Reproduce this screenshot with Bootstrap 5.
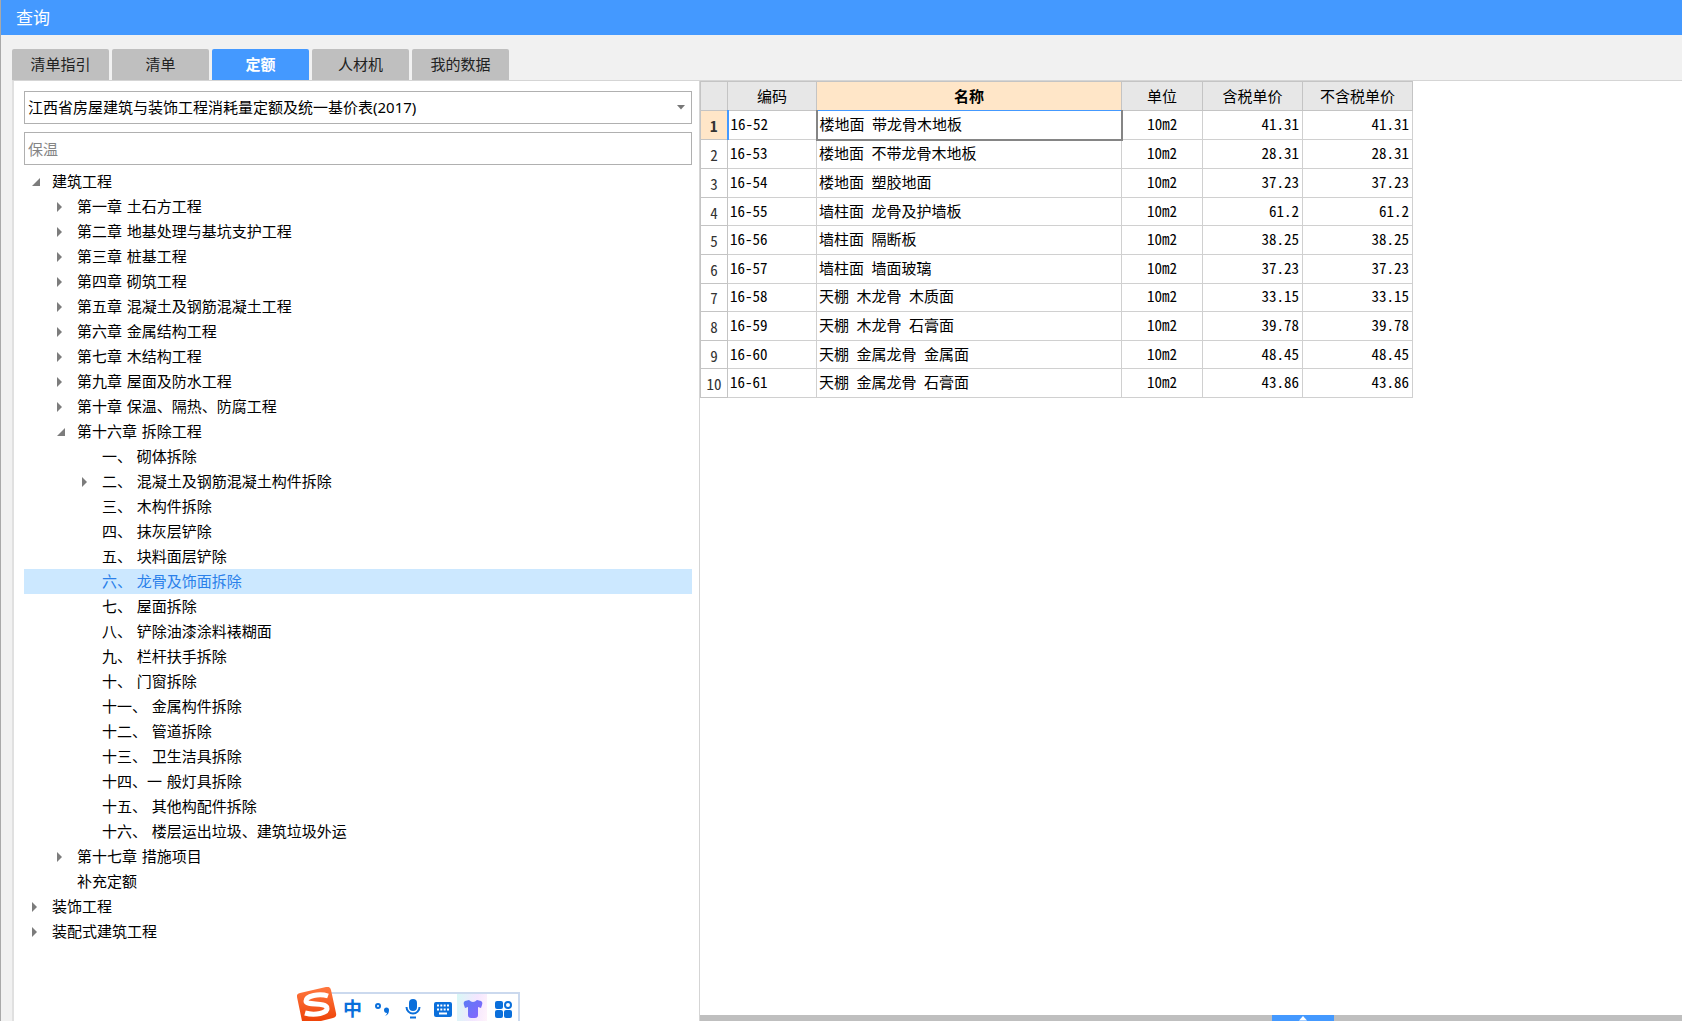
<!DOCTYPE html>
<html lang="zh-CN">
<head>
<meta charset="utf-8">
<meta name="viewport" content="width=device-width, initial-scale=1">
<title>查询</title>
<link href="https://cdn.jsdelivr.net/npm/bootstrap@5.3.0/dist/css/bootstrap.min.css" rel="stylesheet">
<style>
  body { font-family: "Noto Sans", "Noto Sans CJK SC", sans-serif; font-size: 15px; line-height: 25px; color: #000; background: #f1f1f1; }
  .app-window { border-left: 1px solid #a9a9a9; }
  .title-bar { height: 35px; background: #4499ff; font-size: 17px; padding-left: 15px; }
  .tab-strip { gap: 3px; padding: 14px 0 0 11px; }
  .tab-btn { width: 97px; height: 31px; border: 0; padding: 0; border-radius: 2px 2px 0 0; background: #bfbfbf; color: #222; line-height: 31px; }
  .tab-btn.active { background: #4499ff; color: #fff; font-weight: 700; }
  .work-area { margin-left: 11px; border-top: 1px solid #d5d5d5; border-left: 2px solid #e0e0e0; }
  .side-pane { flex: 0 0 686px; max-width: 50%; padding: 10px 7px 0 10px; border-right: 1px solid #d5d5d5; }
  .side-pane .form-select, .side-pane .form-control { height: 33px; border: 1px solid #b0b0b0; border-radius: 0; padding: 0 20px 0 3px; font-size: 15px; color: #000; line-height: 31px; box-shadow: none; }
  .side-pane .form-select { background: #fff url("data:image/svg+xml,%3Csvg xmlns='http://www.w3.org/2000/svg' viewBox='0 0 8 5'%3E%3Cpath d='M0 0h8L4 4.500z' fill='%23777'/%3E%3C/svg%3E") no-repeat right 6px center / 8px 5px; }
  .side-pane .form-control { margin-top: 8px; }
  .side-pane .form-control::placeholder { color: #858585; opacity: 1; }
  .tree { font-family: "DejaVu Sans", "Noto Sans CJK SC", sans-serif; margin-top: 4px; }
  .tree li { display: flex; align-items: center; height: 25px; padding-left: 8px; }
  .tree li.lv1 { padding-left: 33px; }
  .tree li.lv2 { padding-left: 58px; }
  .tree svg, .tree i { flex: none; width: 9px; height: 10px; margin-right: 11px; fill: #7c7c7c; }
  .tree a { color: #000; text-decoration: none; white-space: nowrap; padding-top: 2px; }
  .tree li.picked { background: #cce8ff; }
  .tree li.picked a { color: #2a80ea; }
  .grid-pane { min-width: 0; }
  .quota { width: 713px; height: 317px; table-layout: fixed; border-collapse: collapse; font-family: "Noto Sans CJK SC", sans-serif; font-feature-settings: "hwid"; line-height: 22px; }
  .quota th, .quota td { border: 1px solid #d0d0d0; padding: 0 2px; white-space: nowrap; overflow: hidden; }
  .quota td { padding-bottom: 2px; }
  .quota thead th { height: 29px; background: #e7e7e7; font-weight: 400; text-align: center; border-color: #c4c4c4; }
  .quota thead th.hot { background: #ffe6c8; font-weight: 700; border-bottom: 1px solid #4499ff; }
  .quota tbody th { font-weight: 400; text-align: center; color: #333; padding: 2px 0 0; border-color: #c4c4c4; }
  .quota tbody th.hot { background: #ffe6c8; font-weight: 700; border-right: 2px solid #4499ff; }
  .quota td:nth-child(4) { text-align: center; }
  .quota td:nth-child(n+5) { text-align: right; padding-right: 3px; }
  .quota td.cell-focus { border-right: 2px solid #858585; border-bottom: 2px solid #858585; border-left: 2px solid #858585; }
  .drawer-bar { height: 6px; background: #bfbfbf; }
  .drawer-bar button { width: 62px; height: 6px; border: 0; padding: 0; background: #4499ff; line-height: 0; margin-left: 224px; }
  .ime-bar { left: 296px; bottom: 0; height: 34px; }
  .ime-panel { height: 29px; width: 206px; margin-left: -23px; padding-left: 23px; border: solid #cbd9ee; border-width: 2px 2px 0 0; background: #fff; }
  .ime-panel button { width: 30px; height: 27px; padding: 0 0 0 1px; border: 0; background: transparent; color: #0a6fdb; font: 700 19px/25px "Noto Sans CJK SC", sans-serif; flex: none; }
  .ime-panel svg { display: block; margin: 3px auto 0; }
  .ime-panel .skin { background: linear-gradient(100deg, #d8f8f6, #f4e6ff 60%, #fff3fb); }
</style>
<script src="https://cdn.jsdelivr.net/npm/bootstrap@5.3.0/dist/js/bootstrap.bundle.min.js"></script>
</head>
<body>
<svg class="d-none"><symbol id="shut" viewBox="0 0 9 10"><path d="M0 0v10l5-5z"/></symbol><symbol id="open" viewBox="0 0 9 10"><path d="M8 1v8H0z"/></symbol></svg>
<div class="app-window d-flex flex-column vh-100 overflow-hidden position-relative">
  <header class="title-bar text-white d-flex align-items-center flex-shrink-0">查询</header>
  <nav class="tab-strip d-flex flex-shrink-0" role="tablist" aria-label="数据来源">
    <button class="tab-btn" type="button" role="tab">清单指引</button>
    <button class="tab-btn" type="button" role="tab">清单</button>
    <button class="tab-btn active" type="button" role="tab" aria-selected="true">定额</button>
    <button class="tab-btn" type="button" role="tab">人材机</button>
    <button class="tab-btn" type="button" role="tab">我的数据</button>
  </nav>
  <main class="work-area d-flex flex-fill bg-white">
    <section class="side-pane">
      <select class="form-select" aria-label="定额库"><option>江西省房屋建筑与装饰工程消耗量定额及统一基价表(2017)</option></select>
      <input class="form-control" type="text" placeholder="保温" aria-label="搜索">
      <ul class="tree list-unstyled mb-0">
        <li><svg><use href="#open"/></svg><a href="#">建筑工程</a></li>
        <li class="lv1"><svg><use href="#shut"/></svg><a href="#">第一章 土石方工程</a></li>
        <li class="lv1"><svg><use href="#shut"/></svg><a href="#">第二章 地基处理与基坑支护工程</a></li>
        <li class="lv1"><svg><use href="#shut"/></svg><a href="#">第三章 桩基工程</a></li>
        <li class="lv1"><svg><use href="#shut"/></svg><a href="#">第四章 砌筑工程</a></li>
        <li class="lv1"><svg><use href="#shut"/></svg><a href="#">第五章 混凝土及钢筋混凝土工程</a></li>
        <li class="lv1"><svg><use href="#shut"/></svg><a href="#">第六章 金属结构工程</a></li>
        <li class="lv1"><svg><use href="#shut"/></svg><a href="#">第七章 木结构工程</a></li>
        <li class="lv1"><svg><use href="#shut"/></svg><a href="#">第九章 屋面及防水工程</a></li>
        <li class="lv1"><svg><use href="#shut"/></svg><a href="#">第十章 保温、隔热、防腐工程</a></li>
        <li class="lv1"><svg><use href="#open"/></svg><a href="#">第十六章 拆除工程</a></li>
        <li class="lv2"><i></i><a href="#">一、 砌体拆除</a></li>
        <li class="lv2"><svg><use href="#shut"/></svg><a href="#">二、 混凝土及钢筋混凝土构件拆除</a></li>
        <li class="lv2"><i></i><a href="#">三、 木构件拆除</a></li>
        <li class="lv2"><i></i><a href="#">四、 抹灰层铲除</a></li>
        <li class="lv2"><i></i><a href="#">五、 块料面层铲除</a></li>
        <li class="lv2 picked"><i></i><a href="#">六、 龙骨及饰面拆除</a></li>
        <li class="lv2"><i></i><a href="#">七、 屋面拆除</a></li>
        <li class="lv2"><i></i><a href="#">八、 铲除油漆涂料裱糊面</a></li>
        <li class="lv2"><i></i><a href="#">九、 栏杆扶手拆除</a></li>
        <li class="lv2"><i></i><a href="#">十、 门窗拆除</a></li>
        <li class="lv2"><i></i><a href="#">十一、 金属构件拆除</a></li>
        <li class="lv2"><i></i><a href="#">十二、 管道拆除</a></li>
        <li class="lv2"><i></i><a href="#">十三、 卫生洁具拆除</a></li>
        <li class="lv2"><i></i><a href="#">十四、一 般灯具拆除</a></li>
        <li class="lv2"><i></i><a href="#">十五、 其他构配件拆除</a></li>
        <li class="lv2"><i></i><a href="#">十六、 楼层运出垃圾、建筑垃圾外运</a></li>
        <li class="lv1"><svg><use href="#shut"/></svg><a href="#">第十七章 措施项目</a></li>
        <li class="lv1"><i></i><a href="#">补充定额</a></li>
        <li><svg><use href="#shut"/></svg><a href="#">装饰工程</a></li>
        <li><svg><use href="#shut"/></svg><a href="#">装配式建筑工程</a></li>
      </ul>
    </section>
    <section class="grid-pane d-flex flex-column flex-fill">
      <div class="flex-fill">
        <table class="quota">
          <colgroup><col style="width:27px"><col style="width:89px"><col style="width:305px"><col style="width:81px"><col style="width:100px"><col style="width:110px"></colgroup>
          <thead><tr><th></th><th scope="col">编码</th><th class="hot" scope="col">名称</th><th scope="col">单位</th><th scope="col">含税单价</th><th scope="col">不含税单价</th></tr></thead>
          <tbody>
            <tr><th class="hot" scope="row">1</th><td>16-52</td><td class="cell-focus">楼地面 带龙骨木地板</td><td>10m2</td><td>41.31</td><td>41.31</td></tr>
            <tr><th scope="row">2</th><td>16-53</td><td>楼地面 不带龙骨木地板</td><td>10m2</td><td>28.31</td><td>28.31</td></tr>
            <tr><th scope="row">3</th><td>16-54</td><td>楼地面 塑胶地面</td><td>10m2</td><td>37.23</td><td>37.23</td></tr>
            <tr><th scope="row">4</th><td>16-55</td><td>墙柱面 龙骨及护墙板</td><td>10m2</td><td>61.2</td><td>61.2</td></tr>
            <tr><th scope="row">5</th><td>16-56</td><td>墙柱面 隔断板</td><td>10m2</td><td>38.25</td><td>38.25</td></tr>
            <tr><th scope="row">6</th><td>16-57</td><td>墙柱面 墙面玻璃</td><td>10m2</td><td>37.23</td><td>37.23</td></tr>
            <tr><th scope="row">7</th><td>16-58</td><td>天棚 木龙骨 木质面</td><td>10m2</td><td>33.15</td><td>33.15</td></tr>
            <tr><th scope="row">8</th><td>16-59</td><td>天棚 木龙骨 石膏面</td><td>10m2</td><td>39.78</td><td>39.78</td></tr>
            <tr><th scope="row">9</th><td>16-60</td><td>天棚 金属龙骨 金属面</td><td>10m2</td><td>48.45</td><td>48.45</td></tr>
            <tr><th scope="row">10</th><td>16-61</td><td>天棚 金属龙骨 石膏面</td><td>10m2</td><td>43.86</td><td>43.86</td></tr>
          </tbody>
        </table>
      </div>
      <div class="drawer-bar d-flex justify-content-center">
        <button type="button" aria-label="展开"><svg width="8" height="5" viewBox="0 0 8 5"><path d="M4 0l4 4.500H0z" fill="#fff"/></svg></button>
      </div>
    </section>
  </main>
  <div class="ime-bar position-absolute d-flex align-items-end">
    <svg class="position-relative" width="40" height="34" viewBox="0 0 40 34">
      <defs><linearGradient id="orange" x1="0" y1="0" x2="0" y2="1"><stop offset="0" stop-color="#ff7840"/><stop offset="1" stop-color="#ee4409"/></linearGradient></defs>
      <path d="M3 6L29 0q4-1 5 3l5 23q1 4-3 5l-12 3H5L0 10q-1-3 3-4z" fill="url(#orange)"/>
      <path d="M31 9C22 6 9 9 9 14c0 5 20 1 21 7 1 5-12 8-22 5" fill="none" stroke="#fff" stroke-width="5"/>
    </svg>
    <div class="ime-panel d-flex">
      <button type="button">中</button>
      <button type="button" aria-label="标点"><svg width="20" height="20" viewBox="0 0 20 20"><circle cx="5" cy="7" r="2" fill="none" stroke="#0a6fdb" stroke-width="2"/><path d="M11 11a2.500 2.500 0 1 1 5 0c0 3-1 5-4 6 1-1 2-2 2-3-2 0-3-1-3-3z" fill="#0a6fdb"/></svg></button>
      <button type="button" aria-label="语音"><svg width="20" height="22" viewBox="0 0 20 22"><rect x="6" y="1" width="8" height="12" rx="4" fill="#0a6fdb"/><path d="M3.500 9a6.500 6.500 0 0 0 13 0M7 19.500h6" fill="none" stroke="#0a6fdb" stroke-width="2"/></svg></button>
      <button type="button" aria-label="键盘"><svg width="20" height="20" viewBox="0 0 20 20"><rect x="1" y="3" width="18" height="15" rx="2" fill="#0a6fdb"/><path d="M4 6.500h12M4 10.500h12" stroke="#fff" stroke-width="2" stroke-dasharray="2 1.330"/><path d="M6 14.500h8" stroke="#fff" stroke-width="2"/></svg></button>
      <button type="button" class="skin" aria-label="皮肤"><svg width="20" height="20" viewBox="0 0 20 20"><defs><linearGradient id="violet" x1="0" y1="0" x2="1" y2="1"><stop offset="0" stop-color="#5b7cf5"/><stop offset="1" stop-color="#8a63ff"/></linearGradient></defs><path d="M6 1q4 4 8 0l4 1q2 1 1 4l-1 3-3-1v8q0 3-3 3H8q-3 0-3-3V8l-3 1-1-3q-1-3 1-4z" fill="url(#violet)"/></svg></button>
      <button type="button" aria-label="工具箱"><svg width="20" height="20" viewBox="0 0 20 20" fill="#0a6fdb"><rect x="2" y="2" width="8" height="8" rx="2"/><rect x="2" y="11" width="8" height="8" rx="2"/><rect x="11" y="11" width="8" height="8" rx="2"/><circle cx="15" cy="6" r="3" fill="none" stroke="#0a6fdb" stroke-width="2"/></svg></button>
    </div>
  </div>
</div>
</body>
</html>
